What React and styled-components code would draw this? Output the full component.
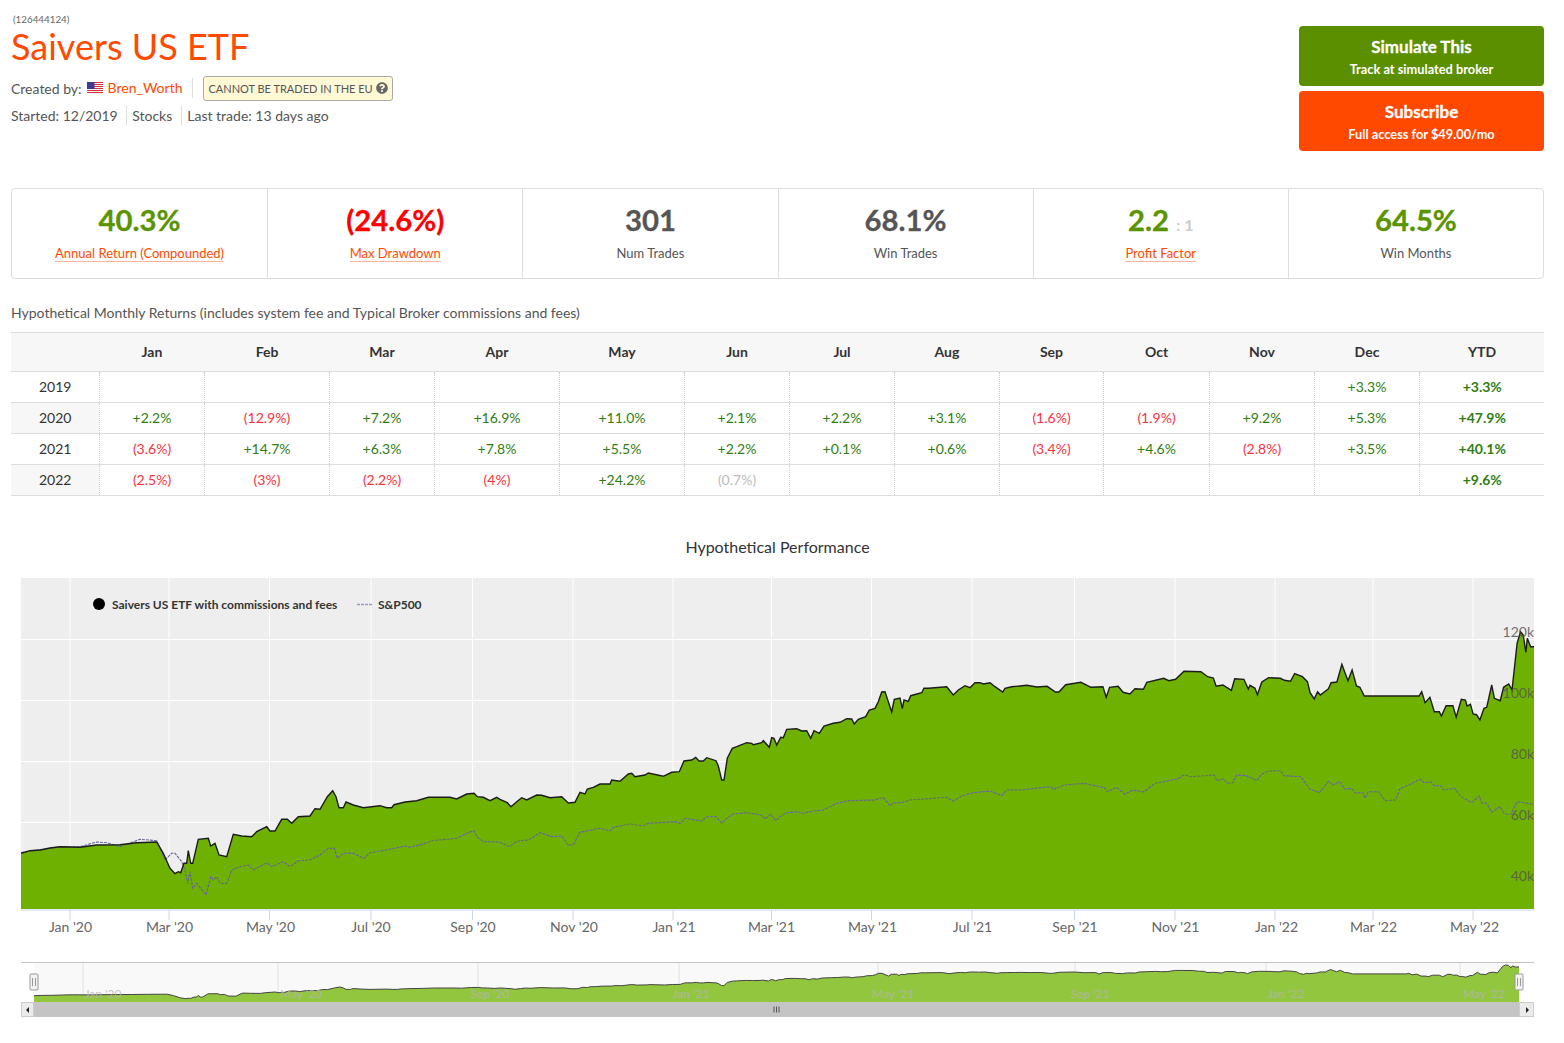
import React from 'react'
import styled, { createGlobalStyle } from 'styled-components'
import { FaQuestionCircle } from 'react-icons/fa'

const GlobalStyle = createGlobalStyle`
  html, body { margin: 0; padding: 0; background: #fff; }
  body { font-family: Lato, "Noto Sans", sans-serif; color: #555; }
`

const MONTHS = ['Jan', 'Feb', 'Mar', 'Apr', 'May', 'Jun', 'Jul', 'Aug', 'Sep', 'Oct', 'Nov', 'Dec']
const COL_WIDTHS = [88, 105, 125, 105, 125, 125, 105, 105, 105, 104, 106, 105, 105, 125]

const RETURNS = [
  { year: 2019, cells: ['', '', '', '', '', '', '', '', '', '', '', '+3.3%'], ytd: '+3.3%' },
  { year: 2020, cells: ['+2.2%', '(12.9%)', '+7.2%', '+16.9%', '+11.0%', '+2.1%', '+2.2%', '+3.1%', '(1.6%)', '(1.9%)', '+9.2%', '+5.3%'], ytd: '+47.9%' },
  { year: 2021, cells: ['(3.6%)', '+14.7%', '+6.3%', '+7.8%', '+5.5%', '+2.2%', '+0.1%', '+0.6%', '(3.4%)', '+4.6%', '(2.8%)', '+3.5%'], ytd: '+40.1%' },
  { year: 2022, cells: ['(2.5%)', '(3%)', '(2.2%)', '(4%)', '+24.2%', '(0.7%)', '', '', '', '', '', ''], ytd: '+9.6%', pending: 5 },
]

// Curve samples at three units per pixel; each block has its own origin
const stitch = (blocks) =>
  blocks.flatMap(({ ox, oy, sx, pts }) => pts.map(([x, y]) => [ox + (x * sx) / 3 - 21, oy + y / 3 - 578]))

const STRATEGY = stitch([
  {
    ox: 0, oy: 570, sx: 1,
    pts: [[63,850],[90,842],[120,840],[150,834],[180,830],[240,832],[290,825],[360,824],[410,818],[470,816],[490,850],[510,895],[525,911],[535,905],[542,908],[552,880],[560,880],[565,842],[572,880],[578,880],[595,808],[625,805],[632,828],[645,820],[657,855],[680,860],[700,793],[725,798],[755,800],[770,785],[800,770],[810,783],[825,783],[845,748],[862,748],[875,760],[895,740],[930,738],[945,716],[960,718],[982,680],[998,662],[1008,680],[1017,713],[1030,713],[1038,696],[1060,705],[1090,713],[1140,707],[1160,713],[1175,713],[1182,704],[1215,696],[1250,692],[1285,682],[1350,682],[1370,687],[1400,672],[1422,670],[1432,680],[1450,682],[1470,692],[1490,682]],
  },
  {
    ox: 500, oy: 640, sx: 1,
    pts: [[0,478],[22,488],[33,500],[50,485],[65,473],[80,480],[110,465],[125,466],[150,473],[185,470],[205,489],[225,487],[240,457],[255,462],[262,447],[280,442],[300,432],[330,432],[335,420],[360,424],[385,402],[395,400],[405,410],[435,405],[445,399],[490,409],[515,397],[538,395],[552,363],[575,360],[587,352],[597,363],[610,363],[620,353],[648,362],[655,378],[665,420],[672,420],[682,355],[697,325],[710,320],[740,308],[755,310],[760,314],[785,308],[790,302],[808,322],[815,293],[822,295],[830,315],[842,292],[850,293],[860,268],[890,266],[905,273],[920,272],[932,295],[942,272],[958,280],[972,258],[1000,250],[1020,247],[1040,236],[1055,237],[1063,252],[1075,238],[1097,230],[1108,210],[1125,205],[1135,185],[1145,156],[1155,155],[1175,216],[1183,178],[1200,174],[1207,206],[1212,180],[1225,184],[1232,167],[1265,158],[1272,145],[1285,145],[1340,140],[1360,165],[1375,150],[1395,137],[1410,143],[1425,128],[1440,128],[1450,132],[1470,128],[1485,140],[1508,156],[1515,145],[1535,140]],
  },
  {
    ox: 1020, oy: 610, sx: 1.0145,
    pts: [[0,228],[20,226],[50,231],[80,229],[105,246],[115,246],[135,224],[180,217],[210,232],[245,230],[255,262],[265,232],[290,229],[305,247],[325,252],[340,236],[365,238],[375,217],[425,205],[440,212],[460,208],[485,184],[535,185],[555,200],[572,204],[580,229],[600,225],[625,241],[635,206],[662,208],[675,237],[680,226],[695,235],[702,254],[715,216],[735,203],[770,205],[782,211],[800,214],[812,191],[835,200],[850,215],[858,248],[870,267],[880,245],[888,255],[912,236],[920,218],[937,216],[952,163],[960,185],[970,212],[982,180],[995,228],[1005,232],[1018,258],[1180,258],[1188,245],[1198,278],[1212,262],[1225,305],[1240,305],[1246,318],[1260,287],[1280,287],[1290,322],[1305,268],[1317,270],[1322,288],[1332,283],[1340,312],[1350,314],[1360,330],[1372,295],[1380,292],[1395,225],[1403,265],[1420,272],[1430,232],[1445,222],[1455,240],[1470,100],[1480,65],[1488,75],[1496,127],[1500,85],[1510,110],[1520,110]],
  },
])

const BENCHMARK = stitch([
  {
    ox: 0, oy: 570, sx: 1,
    pts: [[63,848],[90,843],[130,838],[180,830],[240,830],[290,816],[320,818],[360,830],[420,808],[470,812],[495,870],[515,850],[525,850],[545,875],[555,900],[563,940],[570,905],[578,955],[590,940],[618,975],[632,920],[640,930],[650,920],[660,940],[680,940],[695,900],[720,890],[745,885],[760,900],[800,878],[815,890],[850,875],[870,890],[895,872],[930,870],[960,855],[985,835],[1003,835],[1012,865],[1030,850],[1060,850],[1092,865],[1110,848],[1170,838],[1215,828],[1230,832],[1270,822],[1295,812],[1370,805],[1400,790],[1422,782],[1430,800],[1450,815],[1470,815]],
  },
  {
    ox: 500, oy: 640, sx: 1,
    pts: [[0,607],[28,620],[50,604],[85,600],[120,578],[155,590],[185,588],[205,615],[220,615],[240,577],[300,565],[330,573],[340,562],[390,552],[430,558],[445,550],[530,545],[540,550],[555,535],[605,543],[620,530],[648,530],[665,550],[680,535],[700,522],[740,518],[785,525],[795,537],[812,523],[827,542],[840,530],[860,518],[890,515],[910,520],[940,513],[970,510],[1010,490],[1045,482],[1125,480],[1150,472],[1170,498],[1180,488],[1205,488],[1230,480],[1340,472],[1358,483],[1385,468],[1420,458],[1470,453],[1505,467],[1520,450]],
  },
  {
    ox: 1020, oy: 610, sx: 1.0145,
    pts: [[0,540],[90,530],[100,538],[130,525],[190,520],[250,533],[258,545],[285,532],[310,552],[335,540],[365,546],[400,520],[465,507],[485,495],[505,500],[575,495],[582,512],[600,507],[612,520],[630,518],[640,495],[670,497],[700,512],[715,492],[735,483],[770,482],[780,497],[830,500],[858,538],[885,548],[912,514],[925,525],[945,515],[960,537],[980,535],[990,548],[1015,548],[1020,565],[1030,545],[1060,545],[1080,572],[1110,570],[1125,535],[1150,525],[1183,507],[1195,518],[1215,516],[1225,527],[1245,527],[1252,540],[1285,535],[1302,558],[1325,572],[1335,578],[1358,558],[1365,578],[1380,580],[1395,607],[1420,590],[1432,612],[1452,612],[1470,575],[1520,583]],
  },
])

const PLOT_W = 1513
const PLOT_H = 331

const toPath = (pts) => pts.map(([x, y], i) => `${i ? 'L' : 'M'}${x.toFixed(1)} ${y.toFixed(1)}`).join(' ')

const X_GRID = [49, 148, 248.5, 350, 451.5, 552, 652, 750.5, 850.5, 951, 1053.5, 1154, 1254, 1352, 1452]
const X_LABELS = [
  ["Jan '20", 49.5], ["Mar '20", 148.5], ["May '20", 249.5], ["Jul '20", 350], ["Sep '20", 452],
  ["Nov '20", 553], ["Jan '21", 653], ["Mar '21", 750.5], ["May '21", 851.5], ["Jul '21", 951.5],
  ["Sep '21", 1054], ["Nov '21", 1154.5], ["Jan '22", 1255.5], ["Mar '22", 1352.5], ["May '22", 1453.5],
]
const Y_TICKS = [['120k', 61.5], ['100k', 122.5], ['80k', 183.5], ['60k', 244.5], ['40k', 305.5]]

// Navigator strip: same curve squeezed into a 40px tall band
const NAV_LEFT = 13
const NAV_W = 1485
const navX = (x) => NAV_LEFT + (x / PLOT_W) * NAV_W
const navY = (y) => 33.7 - (275 - y) * 0.139
const NAV_PTS = STRATEGY.map(([x, y]) => [navX(x), navY(y)])
const NAV_GRID = [62, 257, 457, 658, 857, 1054, 1245, 1439]
const NAV_LABELS = [
  ["Jan '20", 82], ["May '20", 280], ["Sep '20", 469], ["Jan '21", 670],
  ["May '21", 872], ["Sep '21", 1069], ["Jan '22", 1265], ["May '22", 1463],
]

function Flag() {
  return (
    <FlagIcon viewBox="0 0 16 12" aria-hidden="true">
      <rect width="16" height="12" fill="#f4f4f4" />
      {[0, 2, 4, 6, 8, 10].map((y) => (
        <rect key={y} y={y} width="16" height="1" fill="#d8303c" />
      ))}
      <rect width="7.5" height="7" fill="#3c3b8e" />
    </FlagIcon>
  )
}

function PlotChart() {
  const area = `${toPath(STRATEGY)} L${PLOT_W} ${STRATEGY[STRATEGY.length - 1][1].toFixed(1)} L${PLOT_W} ${PLOT_H} L0 ${PLOT_H} Z`
  return (
    <PlotSvg viewBox={`0 0 ${PLOT_W} 357`}>
      <rect width={PLOT_W} height={PLOT_H} fill="#eeeeee" />
      {X_GRID.map((x) => (
        <line key={x} x1={x} x2={x} y1="0" y2={PLOT_H} stroke="#fff" strokeWidth="1" />
      ))}
      {Y_TICKS.map(([, y]) => (
        <line key={y} x1="0" x2={PLOT_W} y1={y} y2={y} stroke="#fff" strokeWidth="1" />
      ))}
      <path d={area} fill="#6eb100" />
      <path d={toPath(BENCHMARK)} fill="none" stroke="#66669a" strokeWidth="1.1" strokeDasharray="3 1" />
      <path d={toPath(STRATEGY)} fill="none" stroke="#1c1c1c" strokeWidth="1.4" />

      <line x1="0" x2={PLOT_W} y1="332" y2="332" stroke="#ccd6eb" />
      {X_GRID.map((x) => (
        <line key={x} x1={x} x2={x} y1="332" y2="342" stroke="#ccd6eb" />
      ))}
      {X_LABELS.map(([text, x]) => (
        <AxisText key={text} x={x} y="354" textAnchor="middle">{text}</AxisText>
      ))}
      {Y_TICKS.map(([text, y]) => (
        <YText key={text} x={PLOT_W} y={y - 2.5} textAnchor="end">{text}</YText>
      ))}

      <circle cx="78" cy="26" r="6" fill="#000" />
      <LegendText x="91" y="31">Saivers US ETF with commissions and fees</LegendText>
      <line x1="336" x2="352" y1="26.5" y2="26.5" stroke="#9a9ac8" strokeWidth="1.5" strokeDasharray="3 1" />
      <LegendText x="357" y="31">S&amp;P500</LegendText>
    </PlotSvg>
  )
}

function Handle({ x }) {
  return (
    <g>
      <rect x={x - 4} y="12" width="8" height="16" rx="1" fill="#f2f2f2" stroke="#999" />
      <line x1={x - 1.5} x2={x - 1.5} y1="16" y2="24" stroke="#999" />
      <line x1={x + 1.5} x2={x + 1.5} y1="16" y2="24" stroke="#999" />
    </g>
  )
}

function Navigator() {
  const right = NAV_LEFT + NAV_W
  const area = `${toPath(NAV_PTS)} L${right} ${NAV_PTS[NAV_PTS.length - 1][1].toFixed(1)} L${right} 40 L${NAV_LEFT} 40 Z`
  return (
    <NavSvg viewBox={`0 0 ${PLOT_W} 56`}>
      <rect x={NAV_LEFT} y="0" width={NAV_W} height="40" fill="#f9f9f9" />
      {NAV_GRID.map((x) => (
        <line key={x} x1={x} x2={x} y1="0" y2="40" stroke="#e0e0e0" />
      ))}
      <path d={area} fill="#93c63f" />
      <path d={toPath(NAV_PTS)} fill="none" stroke="#444" strokeWidth="1" />
      {NAV_LABELS.map(([text, x]) => (
        <NavText key={text} x={x} y="36" textAnchor="middle">{text}</NavText>
      ))}
      <line x1="0" x2={PLOT_W} y1="0.5" y2="0.5" stroke="#c4c4c4" />
      <rect x={NAV_LEFT} y="40" width={NAV_W} height="15" fill="#c4c4c4" />
      <rect x="0.5" y="40.5" width={NAV_LEFT - 1} height="14" fill="#ebebeb" stroke="#ccc" />
      <polygon points="8,45 8,51 5,48" fill="#222" />
      <rect x={right + 0.5} y="40.5" width={PLOT_W - right - 1} height="14" fill="#ebebeb" stroke="#ccc" />
      <polygon points="1505,45 1505,51 1508,48" fill="#222" />
      {[753, 755.5, 758].map((x) => (
        <line key={x} x1={x} x2={x} y1="44.5" y2="50.5" stroke="#555" />
      ))}
      <Handle x={NAV_LEFT} />
      <Handle x={right} />
    </NavSvg>
  )
}

function cellTone(value, pending) {
  if (pending) return 'pending'
  return value.startsWith('(') ? 'loss' : 'gain'
}

export default function App() {
  return (
    <Page>
      <GlobalStyle />
      <Header>
        <div>
          <SystemId>(126444124)</SystemId>
          <Title>Saivers US ETF</Title>
          <MetaRow>
            <Creator>Created by:</Creator>
            <Flag />
            <AuthorLink>Bren_Worth</AuthorLink>
            <Badge>
              CANNOT BE TRADED IN THE EU
              <FaQuestionCircle />
            </Badge>
          </MetaRow>
          <InfoRow>
            <InfoItem>Started: 12/2019</InfoItem>
            <InfoItem>Stocks</InfoItem>
            <InfoItem>Last trade: 13 days ago</InfoItem>
          </InfoRow>
        </div>
        <Actions>
          <ActionButton $bg="#5c8f00">
            <strong>Simulate This</strong>
            <span>Track at simulated broker</span>
          </ActionButton>
          <ActionButton $bg="#ff4800">
            <strong>Subscribe</strong>
            <span>Full access for $49.00/mo</span>
          </ActionButton>
        </Actions>
      </Header>

      <Stats>
        <Stat>
          <StatValue $color="#5a9400">40.3%</StatValue>
          <StatLink>Annual Return (Compounded)</StatLink>
        </Stat>
        <Stat>
          <StatValue $color="#ff0000">(24.6%)</StatValue>
          <StatLink>Max Drawdown</StatLink>
        </Stat>
        <Stat>
          <StatValue>301</StatValue>
          <StatLabel>Num Trades</StatLabel>
        </Stat>
        <Stat>
          <StatValue>68.1%</StatValue>
          <StatLabel>Win Trades</StatLabel>
        </Stat>
        <Stat>
          <StatValue $color="#5a9400">
            2.2 <Ratio>: 1</Ratio>
          </StatValue>
          <StatLink>Profit Factor</StatLink>
        </Stat>
        <Stat>
          <StatValue $color="#5a9400">64.5%</StatValue>
          <StatLabel>Win Months</StatLabel>
        </Stat>
      </Stats>

      <SectionHeading>
        Hypothetical Monthly Returns (includes system fee and Typical Broker commissions and fees)
      </SectionHeading>

      <ReturnsTable>
        <colgroup>
          {COL_WIDTHS.map((w, i) => (
            <Col key={i} $w={w} />
          ))}
        </colgroup>
        <thead>
          <tr>
            <HeadCell />
            {MONTHS.map((m) => (
              <HeadCell key={m}>{m}</HeadCell>
            ))}
            <HeadCell>YTD</HeadCell>
          </tr>
        </thead>
        <tbody>
          {RETURNS.map((row, r) => (
            <tr key={row.year}>
              <YearCell $shaded={r % 2 === 1}>{row.year}</YearCell>
              {row.cells.map((value, i) => (
                <ValueCell key={i} $tone={value ? cellTone(value, row.pending === i) : 'gain'}>
                  {value}
                </ValueCell>
              ))}
              <YtdCell>{row.ytd}</YtdCell>
            </tr>
          ))}
        </tbody>
      </ReturnsTable>

      <ChartTitle>Hypothetical Performance</ChartTitle>
      <ChartWrap>
        <PlotChart />
        <Navigator />
      </ChartWrap>
    </Page>
  )
}

const Page = styled.div`
  width: 1533px;
  padding: 0 20px 25px 11px;
`

const Header = styled.header`
  display: flex;
  justify-content: space-between;
  align-items: flex-start;
  height: 188px;
  padding-top: 13px;
  box-sizing: border-box;
`

const SystemId = styled.div`
  font-size: 9.8px;
  line-height: 12px;
  color: #666;
  padding-left: 2px;
`

const Title = styled.h1`
  margin: 0;
  font-size: 36px;
  font-weight: 400;
  line-height: 42px;
  color: #ff4a00;
`

const MetaRow = styled.div`
  display: flex;
  align-items: center;
  height: 26px;
  margin-top: 8px;
  font-size: 14px;
`

const Creator = styled.span`
  color: #555;
  margin-right: 5px;
`

const FlagIcon = styled.svg`
  width: 16px;
  height: 12px;
  margin-right: 5px;
`

const AuthorLink = styled.a`
  color: #ff4a00;
  padding-right: 10px;
  border-right: 1px solid #ddd;
  line-height: 20px;
`

const Badge = styled.span`
  display: inline-flex;
  align-items: center;
  gap: 3px;
  height: 25px;
  box-sizing: border-box;
  margin-left: 10px;
  padding: 0 4px;
  background: #fff9d6;
  border: 1px solid #aaa;
  border-radius: 3px;
  font-size: 11px;
  color: #555;

  svg {
    width: 12px;
    height: 12px;
    color: #666;
  }
`

const InfoRow = styled.div`
  display: flex;
  align-items: center;
  margin-top: 5px;
  font-size: 14px;
`

const InfoItem = styled.span`
  line-height: 19px;
  padding: 0 9px 0 5px;
  border-right: 1px solid #ddd;

  &:first-child {
    padding-left: 0;
    padding-right: 8.5px;
  }

  &:last-child {
    border-right: none;
  }
`

const Actions = styled.div`
  display: flex;
  flex-direction: column;
  gap: 5px;
  margin-top: 13px;
`

const ActionButton = styled.a`
  display: flex;
  flex-direction: column;
  align-items: center;
  justify-content: center;
  gap: 3px;
  width: 245px;
  height: 60px;
  background: ${(p) => p.$bg};
  border-radius: 4px;
  color: #fff;

  strong {
    font-size: 17px;
    font-weight: 700;
    line-height: 22px;
    -webkit-text-stroke: 0.3px #fff;
  }

  span {
    font-size: 12.8px;
    font-weight: 700;
    line-height: 16px;
  }
`

const Stats = styled.section`
  display: grid;
  grid-template-columns: repeat(6, 1fr);
  height: 91px;
  box-sizing: border-box;
  border: 1px solid #ddd;
  border-radius: 4px;
`

const Stat = styled.div`
  display: flex;
  flex-direction: column;
  align-items: center;
  padding-top: 13px;
  border-left: 1px solid #ddd;

  &:first-child {
    border-left: none;
  }
`

const StatValue = styled.div`
  height: 36px;
  font-size: 29.3px;
  font-weight: 700;
  line-height: 36px;
  color: ${(p) => p.$color || '#555'};
  -webkit-text-stroke: 0.3px ${(p) => p.$color || '#555'};
`

const Ratio = styled.small`
  font-size: 16px;
  color: #ccc;
  -webkit-text-stroke: 0;
`

const StatLabel = styled.div`
  margin-top: 6px;
  font-size: 13px;
  line-height: 18px;
  color: #555;
`

const StatLink = styled(StatLabel)`
  margin-top: 7px;
  color: #ff4a00;
  border-bottom: 1px solid #ffb39a;
  line-height: 16px;
`

const SectionHeading = styled.h2`
  margin: 24px 0 9px;
  font-size: 14px;
  font-weight: 400;
  line-height: 20px;
  color: #555;
`

const ReturnsTable = styled.table`
  width: 1533px;
  table-layout: fixed;
  border-collapse: collapse;
  font-size: 14px;
`

const Col = styled.col`
  width: ${(p) => p.$w}px;
`

const HeadCell = styled.th`
  height: 36px;
  padding: 0 0 2px 1px;
  background: #f7f7f7;
  border-top: 1px solid #ddd;
  border-bottom: 1px solid #ddd;
  font-weight: 700;
  color: #333;
`

const YearCell = styled.td`
  height: 28px;
  padding: 0 0 2px 1px;
  text-align: center;
  background: ${(p) => (p.$shaded ? '#f7f7f7' : '#fff')};
  border-bottom: 1px solid #ddd;
  color: #333;
`

const TONES = { gain: '#2f7d14', loss: '#f5333f', pending: '#bbb' }

const ValueCell = styled.td`
  padding: 0 0 2px 1px;
  text-align: center;
  border-left: 1px dotted #ccc;
  border-bottom: 1px solid #ddd;
  color: ${(p) => TONES[p.$tone]};
`

const YtdCell = styled(ValueCell).attrs({ $tone: 'gain' })`
  font-weight: 700;
`

const ChartTitle = styled.div`
  margin-top: 41px;
  text-align: center;
  font-size: 16px;
  line-height: 20px;
  color: #333;
`

const ChartWrap = styled.div`
  margin: 21px 0 0 10px;
  width: 1513px;
`

const PlotSvg = styled.svg`
  display: block;
  width: 1513px;
  height: 357px;
`

const NavSvg = styled.svg`
  display: block;
  width: 1513px;
  height: 56px;
  margin-top: 27px;
`

const AxisText = styled.text`
  font-size: 14px;
  fill: #666;
`

const YText = styled.text`
  font-size: 14px;
  fill: #555;
  fill-opacity: 0.85;
`

const LegendText = styled.text`
  font-size: 12px;
  font-weight: 700;
  fill: #333;
`

const NavText = styled.text`
  font-size: 12px;
  fill: #b5b5b5;
  fill-opacity: 0.8;
`
